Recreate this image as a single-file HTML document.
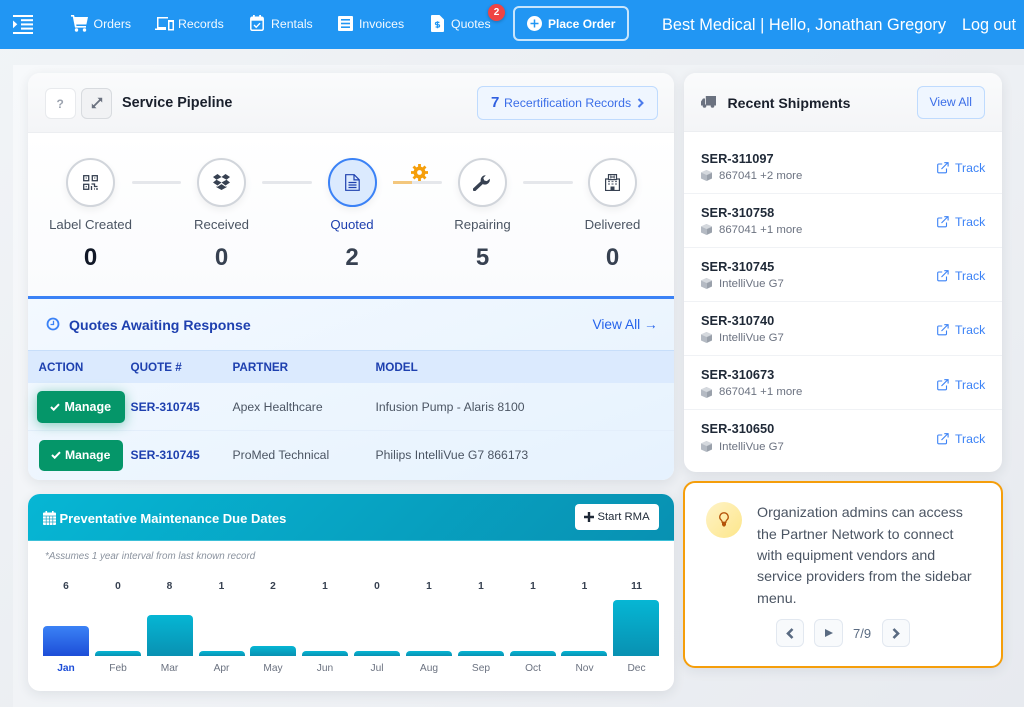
<!DOCTYPE html>
<html><head><meta charset="utf-8"><title>Dashboard</title>
<style>
*{box-sizing:border-box}
html,body{margin:0;padding:0}
body{width:1024px;height:707px;overflow:hidden;position:relative;background:linear-gradient(135deg,#f1f4f7,#e4e7ec);font-family:"Liberation Sans",sans-serif;color:#1f2937}
.a,.t{position:absolute}
.t{white-space:nowrap;line-height:1}
.c{transform:translateX(-50%);text-align:center}
svg{position:absolute;display:block}
.nav{color:#fff;font-size:12.3px;top:17.5px;opacity:.95}
.card{position:absolute;border-radius:12px;background:#fff;box-shadow:0 3px 12px rgba(30,41,59,.09);overflow:hidden}
.circ{position:absolute;top:158px;width:49px;height:49px;border-radius:50%;background:#fff;border:2px solid #d1d5db;box-shadow:0 3px 8px rgba(0,0,0,.06)}
.ln{position:absolute;top:180.5px;height:3px;background:#e5e7eb;border-radius:2px}
.lab{top:218px;font-size:13.2px;color:#4b5563}
.num{top:246px;font-size:24px;font-weight:700;color:#374151}
.th{top:362px;font-size:11.7px;font-weight:700;color:#1e40af}
.cell{font-size:12.2px;color:#4b5563}
.ser{font-size:12.1px;font-weight:700;color:#1e40af}
.btn{position:absolute;background:#059669;border-radius:5px;color:#fff;font-weight:700}
.v{top:582px;font-size:10.2px;font-weight:700;color:#374151}
.m{top:664px;font-size:10.2px;color:#6b7280}
.bar{position:absolute;width:46px;bottom:35px;border-radius:4px 4px 0 0;background:linear-gradient(180deg,#06b6d4,#0891b2)}
.sid{left:701px;font-size:12.8px;font-weight:700;color:#1f2937}
.sub{left:719px;font-size:11.4px;color:#6b7280}
.tr{left:955px;font-size:12.3px;color:#3b82f6}
.sep{position:absolute;left:684px;width:318px;height:1px;background:#f0f2f5}
.tip{left:757px;font-size:14.25px;color:#4b5563}
.tb{position:absolute;top:619px;height:28px;background:#f8fafc;border:1px solid #e2e8f0;border-radius:6px}
</style></head><body>

<div class="a" style="left:0;top:0;width:1024px;height:49px;background:#2196f3"></div>
<div class="a" style="left:13px;top:65px;width:1011px;height:642px;background:linear-gradient(135deg,#f7f9fb,#e7eaef)"></div>

<!-- hamburger -->
<svg style="left:13px;top:15px" width="20" height="19" viewBox="0 0 20 19" fill="#fff"><rect y="0" width="20" height="2"/><rect x="8" y="4.2" width="12" height="2"/><rect x="8" y="8.4" width="12" height="2"/><rect x="8" y="12.6" width="12" height="2"/><rect y="17" width="20" height="2"/><path d="M0 5.500l4.300 3.800L0 13.200z"/></svg>

<!-- cart -->
<svg style="left:71px;top:15px" width="17" height="17" viewBox="0 0 17 17" fill="#fff"><path d="M0 0h3l.6 2H17l-1.600 7.500H5.200l.3 1.500H15v1.600H4L1.800 1.600H0z"/><circle cx="5.500" cy="15" r="1.700"/><circle cx="13.500" cy="15" r="1.700"/></svg>
<div class="t nav" style="left:93.5px">Orders</div>

<!-- laptop/devices -->
<svg style="left:155px;top:16px" width="19" height="15" viewBox="0 0 19 15" fill="#fff"><path d="M2 1h11v1.500H3.500V11H11v3H0v-1.500h2z"/><path fill-rule="evenodd" d="M13 4h6v10.500h-6zM14.500 6v7h3V6z"/></svg>
<div class="t nav" style="left:178px">Records</div>

<!-- calendar check -->
<svg style="left:250px;top:15px" width="14" height="16" viewBox="0 0 14 16"><rect x=".8" y="2.3" width="12.4" height="12.9" rx="1.4" fill="none" stroke="#fff" stroke-width="1.5"/><rect x="1" y="2.5" width="12" height="3.2" fill="#fff"/><rect x="3" y="0" width="1.8" height="3.5" fill="#fff"/><rect x="9.2" y="0" width="1.8" height="3.5" fill="#fff"/><path d="M4 10l2.200 2.200L10 8.200" fill="none" stroke="#fff" stroke-width="1.400"/></svg>
<div class="t nav" style="left:271px">Rentals</div>

<!-- invoice -->
<svg style="left:338px;top:16px" width="15" height="15" viewBox="0 0 15 15"><rect width="15" height="15" rx="1" fill="#fff"/><rect x="3" y="3" width="9" height="1.6" fill="#2196f3"/><rect x="3" y="6.7" width="9" height="1.6" fill="#2196f3"/><rect x="3" y="10.4" width="9" height="1.6" fill="#2196f3"/></svg>
<div class="t nav" style="left:359px">Invoices</div>

<!-- quote file -->
<svg style="left:431px;top:15px" width="13" height="17" viewBox="0 0 13 17"><path d="M1 0h7.500L13 4.500V16a1 1 0 0 1-1 1H1a1 1 0 0 1-1-1V1a1 1 0 0 1 1-1z" fill="#fff"/><path d="M8.400 7.400H5.600a.9.9 0 0 0 0 2.300h1.800a.9.9 0 0 1 0 2.300H4.600M6.500 6.200v7" fill="none" stroke="#2196f3" stroke-width="1.200"/></svg>
<div class="t nav" style="left:451px">Quotes</div>
<div class="a" style="left:488px;top:4px;width:17px;height:17px;border-radius:50%;background:#ef4444;color:#fff;font-size:10px;font-weight:700;text-align:center;line-height:17px;box-shadow:0 1px 3px rgba(0,0,0,.25)">2</div>

<!-- place order -->
<div class="a" style="left:513px;top:6px;width:116px;height:35px;border:2px solid rgba(255,255,255,.75);border-radius:6px"></div>
<svg style="left:527px;top:16px" width="15" height="15" viewBox="0 0 15 15"><circle cx="7.500" cy="7.500" r="7.500" fill="#fff"/><path d="M7.500 3.500v8M3.500 7.500h8" stroke="#2196f3" stroke-width="1.500"/></svg>
<div class="t" style="left:548px;top:17.5px;font-size:12px;font-weight:700;color:#fff">Place Order</div>

<div class="t" style="left:662px;top:16.5px;font-size:16.35px;color:#fff">Best Medical | Hello, Jonathan Gregory</div>
<div class="t" style="left:962px;top:16.5px;font-size:16.2px;color:#fff">Log out</div>

<!-- Service Pipeline card -->
<div class="card" style="left:28px;top:73px;width:646px;height:407px"></div>
<div class="a" style="left:28px;top:73px;width:646px;height:60px;border-radius:12px 12px 0 0;background:linear-gradient(180deg,#fafbfc,#f4f5f7);border-bottom:1px solid #eceef1"></div>
<div class="a" style="left:28px;top:133px;width:646px;height:163px;background:linear-gradient(180deg,#fff,#fafbfd)"></div>
<div class="a" style="left:45px;top:88px;width:31px;height:31px;background:#fff;border:1px solid #e8eaed;border-radius:6px"></div>
<div class="t" style="left:56.5px;top:98px;font-size:12px;font-weight:700;color:#9ca3af">?</div>
<div class="a" style="left:81px;top:88px;width:31px;height:31px;background:#f1f2f4;border:1px solid #d8dbdf;border-radius:6px"></div>
<svg style="left:91px;top:97px" width="12" height="12" viewBox="0 0 12 12"><path d="M2.500 9.500l7-7" stroke="#6b7280" stroke-width="1.800"/><path d="M6.500 .8h4.700v4.700zM5.500 11.200H.8V6.500z" fill="#6b7280"/></svg>
<div class="t" style="left:122px;top:96px;font-size:14.4px;font-weight:700;color:#1a202c">Service Pipeline</div>

<div class="a" style="left:477px;top:86px;width:181px;height:34px;background:#eff6ff;border:1px solid #bfdbfe;border-radius:6px"></div>
<div class="t" style="left:491px;top:95px;font-size:15px;font-weight:700;color:#2f5fe0">7</div>
<div class="t" style="left:504px;top:97px;font-size:12.3px;color:#3b6ee8">Recertification Records</div>
<svg style="left:637px;top:98px" width="7" height="10" viewBox="0 0 7 10"><path d="M1.500 1l4 4-4 4" fill="none" stroke="#4b7bec" stroke-width="2"/></svg>

<!-- stages -->
<div class="ln" style="left:132px;width:49px"></div>
<div class="ln" style="left:262px;width:50px"></div>
<div class="ln" style="left:393px;width:49px"></div>
<div class="a" style="left:393px;top:180.5px;width:19px;height:3px;background:#f3c77d"></div>
<div class="ln" style="left:523px;width:50px"></div>

<div class="circ" style="left:66px"></div>
<div class="circ" style="left:197px"></div>
<div class="circ" style="left:328px;background:#dbeafe;border-color:#3b82f6"></div>
<div class="circ" style="left:458px"></div>
<div class="circ" style="left:588px"></div>

<!-- QR -->
<svg style="left:83px;top:175px" width="15" height="15" viewBox="0 0 15 15" fill="none" stroke="#374151" stroke-width="1.300"><rect x=".7" y=".7" width="5" height="5"/><rect x="9.300" y=".7" width="5" height="5"/><rect x=".7" y="9.300" width="5" height="5"/><path d="M2.700 3h1M11.300 3h1M2.700 11.600h1M8.500 9h3v2.500h3M8.500 11v4M11 14h1M14 13v2" /></svg>
<!-- dropbox -->
<svg style="left:213px;top:174px" width="17" height="16" viewBox="0 0 17 16" fill="#374151"><path d="M4.500 0L0 3l3.500 2.700L8.500 3zM12.500 0l-4 3 5 2.700L17 3zM3.500 5.700L0 8.500l4.500 3 4-3zM13.500 5.700l-5 2.800 4 3 4.500-3z"/><path d="M3.500 12.200l1 .6 4-2.700 4 2.700 1-.6v1L8.500 16l-5-2.800z"/></svg>
<!-- file -->
<svg style="left:345px;top:174px" width="15" height="17" viewBox="0 0 15 17" fill="none" stroke="#1e40af" stroke-width="1.200"><path d="M.7.7h8.500l5 5v10.600H.7z"/><path d="M9 .7v5.200h5.200M3.500 8.500h8M3.500 11h8M3.500 13.500h8"/></svg>
<!-- gear -->
<svg style="left:411px;top:164px" width="17" height="17" viewBox="0 0 17 17"><circle cx="8.500" cy="8.500" r="4.200" fill="none" stroke="#f59e0b" stroke-width="3.600"/><path d="M8.500 0v3M8.500 14v3M0 8.500h3M14 8.500h3M2.500 2.500l2 2M12.500 12.500l2 2M2.500 14.500l2-2M12.500 4.500l2-2" stroke="#f59e0b" stroke-width="2.800"/></svg>
<!-- wrench -->
<svg style="left:473px;top:174px" width="18" height="17" viewBox="0 0 18 17"><path d="M1.500 15.500L9 8.500" stroke="#374151" stroke-width="3.400" stroke-linecap="round"/><path d="M7.800 7.500a5 5 0 0 1 5-6.300l-2.500 2.800 1 2.500 2.500.6 3-2.400a5 5 0 0 1-6.800 5.500z" fill="#374151"/></svg>
<!-- hospital -->
<svg style="left:605px;top:174px" width="15" height="17" viewBox="0 0 15 17"><rect x=".6" y="5" width="13.800" height="11.500" fill="none" stroke="#374151" stroke-width="1.200"/><rect x="3.500" y=".6" width="8" height="5" fill="#fff" stroke="#374151" stroke-width="1.200"/><path d="M5.800 1.500v3M9.200 1.500v3M5.800 3h3.400" stroke="#374151"/><path d="M3 7.500h2M6.500 7.500h2M10 7.500h2M3 10h2M6.500 10h2M10 10h2" stroke="#6b7280" stroke-width="1.300"/><rect x="5.500" y="12.500" width="4" height="4" fill="#374151"/></svg>

<div class="t c lab" style="left:90.5px">Label Created</div>
<div class="t c lab" style="left:221.5px">Received</div>
<div class="t c lab" style="left:352px;color:#1e40af">Quoted</div>
<div class="t c lab" style="left:482.5px">Repairing</div>
<div class="t c lab" style="left:612.5px">Delivered</div>
<div class="t c num" style="left:90.5px;color:#111827">0</div>
<div class="t c num" style="left:221.5px">0</div>
<div class="t c num" style="left:352px">2</div>
<div class="t c num" style="left:482.5px">5</div>
<div class="t c num" style="left:612.5px">0</div>

<!-- quotes -->
<div class="a" style="left:28px;top:296px;width:646px;height:184px;border-radius:0 0 12px 12px;background:linear-gradient(160deg,#f3f9ff,#e6f2fe);border-top:3px solid #3b82f6"></div>
<svg style="left:46px;top:317px" width="14" height="14" viewBox="0 0 14 14" fill="none" stroke="#3b82f6" stroke-width="1.800"><circle cx="7" cy="7" r="5.500"/><path d="M7.500 3.800V7.500H4.500" stroke-width="1.300"/></svg>
<div class="t" style="left:69px;top:318px;font-size:14.1px;font-weight:700;color:#1e40af">Quotes Awaiting Response</div>
<div class="t" style="left:592.5px;top:318px;font-size:13.7px;color:#2563eb">View All →</div>
<div class="a" style="left:28px;top:350px;width:646px;height:33px;background:#dbeafe;border-top:1px solid #c7defa"></div>
<div class="t th" style="left:38.5px">ACTION</div>
<div class="t th" style="left:130.5px">QUOTE #</div>
<div class="t th" style="left:232.5px">PARTNER</div>
<div class="t th" style="left:375.5px">MODEL</div>
<div class="a" style="left:28px;top:430px;width:646px;height:1px;background:#e3eefb"></div>

<div class="btn" style="left:37px;top:391px;width:88px;height:32px;box-shadow:0 2px 12px rgba(5,150,105,.45)"></div>
<svg style="left:50px;top:403px" width="10" height="8" viewBox="0 0 10 8"><path d="M1 4l2.700 2.700L9 1.200" fill="none" stroke="#fff" stroke-width="2"/></svg>
<div class="t" style="left:64.5px;top:400.5px;font-size:12.5px;font-weight:700;color:#fff">Manage</div>
<div class="btn" style="left:39px;top:440px;width:84px;height:31px"></div>
<svg style="left:51px;top:451px" width="10" height="8" viewBox="0 0 10 8"><path d="M1 4l2.700 2.700L9 1.200" fill="none" stroke="#fff" stroke-width="2"/></svg>
<div class="t" style="left:65px;top:448.5px;font-size:12.2px;font-weight:700;color:#fff">Manage</div>

<div class="t ser" style="left:130.5px;top:401px">SER-310745</div>
<div class="t cell" style="left:232.5px;top:401px">Apex Healthcare</div>
<div class="t cell" style="left:375.5px;top:401px">Infusion Pump - Alaris 8100</div>
<div class="t ser" style="left:130.5px;top:449px">SER-310745</div>
<div class="t cell" style="left:232.5px;top:449px">ProMed Technical</div>
<div class="t cell" style="left:375.5px;top:449px">Philips IntelliVue G7 866173</div>

<!-- PM card -->
<div class="card" style="left:28px;top:494px;width:646px;height:197px">
<div class="a" style="left:0;top:0;width:646px;height:47px;background:linear-gradient(135deg,#06b6d4,#0891b2);border-bottom:1px solid #3cc0d8"></div>
<div class="bar" style="left:15px;height:30px;background:linear-gradient(180deg,#3b82f6,#1d4ed8)"></div>
<div class="bar" style="left:67px;height:5px"></div>
<div class="bar" style="left:119px;height:41px"></div>
<div class="bar" style="left:171px;height:5px"></div>
<div class="bar" style="left:222px;height:10px"></div>
<div class="bar" style="left:274px;height:5px"></div>
<div class="bar" style="left:326px;height:5px"></div>
<div class="bar" style="left:378px;height:5px"></div>
<div class="bar" style="left:430px;height:5px"></div>
<div class="bar" style="left:482px;height:5px"></div>
<div class="bar" style="left:533px;height:5px"></div>
<div class="bar" style="left:585px;height:56px"></div>
</div>
<svg style="left:43px;top:511px" width="13" height="14" viewBox="0 0 13 14"><rect x="0" y="1.500" width="13" height="12.500" rx="1" fill="#fff"/><path d="M0 5h13M3.200 5v9M6.500 5v9M9.800 5v9M0 8h13M0 11h13" stroke="#22a9c8" stroke-width=".7"/><rect x="2.500" y="0" width="1.600" height="3" fill="#fff"/><rect x="9" y="0" width="1.600" height="3" fill="#fff"/></svg>
<div class="t" style="left:59.5px;top:511.5px;font-size:13px;font-weight:700;color:#fff">Preventative Maintenance Due Dates</div>
<div class="a" style="left:575px;top:504px;width:84px;height:26px;background:#fff;border-radius:4px"></div>
<svg style="left:584px;top:512px" width="10" height="10" viewBox="0 0 10 10"><path d="M5 0v10M0 5h10" stroke="#1f2937" stroke-width="2.400"/></svg>
<div class="t" style="left:597.5px;top:511.5px;font-size:11.3px;color:#1f2937">Start RMA</div>
<div class="t" style="left:45px;top:552px;font-size:9.8px;font-style:italic;color:#8a929e">*Assumes 1 year interval from last known record</div>

<div class="t c v" style="left:66px">6</div><div class="t c v" style="left:118px">0</div><div class="t c v" style="left:169.5px">8</div><div class="t c v" style="left:221.5px">1</div><div class="t c v" style="left:273px">2</div><div class="t c v" style="left:325px">1</div><div class="t c v" style="left:377px">0</div><div class="t c v" style="left:429px">1</div><div class="t c v" style="left:481px">1</div><div class="t c v" style="left:533px">1</div><div class="t c v" style="left:584.5px">1</div><div class="t c v" style="left:636.5px">11</div>
<div class="t c m" style="left:66px;color:#1d4ed8;font-weight:700">Jan</div><div class="t c m" style="left:118px">Feb</div><div class="t c m" style="left:169.5px">Mar</div><div class="t c m" style="left:221.5px">Apr</div><div class="t c m" style="left:273px">May</div><div class="t c m" style="left:325px">Jun</div><div class="t c m" style="left:377px">Jul</div><div class="t c m" style="left:429px">Aug</div><div class="t c m" style="left:481px">Sep</div><div class="t c m" style="left:533px">Oct</div><div class="t c m" style="left:584.5px">Nov</div><div class="t c m" style="left:636.5px">Dec</div>

<!-- Shipments -->
<div class="card" style="left:684px;top:73px;width:318px;height:399px"></div>
<div class="a" style="left:684px;top:73px;width:318px;height:59px;border-radius:12px 12px 0 0;background:linear-gradient(180deg,#fafbfc,#f4f5f7);border-bottom:1px solid #eceef1"></div>
<svg style="left:701px;top:96px" width="15" height="12" viewBox="0 0 15 12" fill="#6b7280"><path d="M4.800 0H15v9.500H4.800zM4 2.500H2L0 5.500v4h4z"/><circle cx="3.500" cy="10" r="1.800"/><circle cx="11.500" cy="10" r="1.800"/></svg>
<div class="t" style="left:727.5px;top:96px;font-size:14.1px;font-weight:700;color:#1a202c">Recent Shipments</div>
<div class="a" style="left:917px;top:86px;width:68px;height:33px;background:#eff6ff;border:1px solid #bfdbfe;border-radius:6px"></div>
<div class="t" style="left:929.5px;top:96px;font-size:12.2px;color:#3b6ee8">View All</div>

<div class="sep" style="top:193px"></div><div class="sep" style="top:247px"></div><div class="sep" style="top:301px"></div><div class="sep" style="top:355px"></div><div class="sep" style="top:409px"></div>

<div class="t sid" style="top:152.500px">SER-311097</div><div class="t sub" style="top:170.5px">867041 +2 more</div>
<div class="t sid" style="top:207px">SER-310758</div><div class="t sub" style="top:224.5px">867041 +1 more</div>
<div class="t sid" style="top:261px">SER-310745</div><div class="t sub" style="top:278.5px">IntelliVue G7</div>
<div class="t sid" style="top:315px">SER-310740</div><div class="t sub" style="top:332.5px">IntelliVue G7</div>
<div class="t sid" style="top:369px">SER-310673</div><div class="t sub" style="top:386.5px">867041 +1 more</div>
<div class="t sid" style="top:423px">SER-310650</div><div class="t sub" style="top:441.5px">IntelliVue G7</div>

<div class="t tr" style="top:162px">Track</div><div class="t tr" style="top:216px">Track</div><div class="t tr" style="top:270px">Track</div><div class="t tr" style="top:324px">Track</div><div class="t tr" style="top:378.5px">Track</div><div class="t tr" style="top:432.5px">Track</div>

<svg width="0" height="0" style="position:absolute"><defs>
<g id="bx"><path d="M5.500 0L11 2.500v6L5.500 11 0 8.500v-6z" fill="#b4bac3"/><path d="M5.500 5L0 2.500 5.500 0 11 2.500z" fill="#d5d9de"/><path d="M6 5.200L11 3v5.400L6 10.700z" fill="#9aa1ab"/></g>
<g id="ex" fill="none" stroke="#3b82f6" stroke-width="1.100"><path d="M9.500 6.500v3.300a1 1 0 0 1-1 1H1.700a1 1 0 0 1-1-1V3a1 1 0 0 1 1-1h3.500"/><path d="M4.500 7L10.500 1"/><path d="M7.300.7h3.800v3.800"/></g>
</defs></svg>
<svg style="left:701px;top:170px" width="11" height="11"><use href="#bx"/></svg>
<svg style="left:701px;top:224px" width="11" height="11"><use href="#bx"/></svg>
<svg style="left:701px;top:278px" width="11" height="11"><use href="#bx"/></svg>
<svg style="left:701px;top:332px" width="11" height="11"><use href="#bx"/></svg>
<svg style="left:701px;top:386.5px" width="11" height="11"><use href="#bx"/></svg>
<svg style="left:701px;top:441px" width="11" height="11"><use href="#bx"/></svg>
<svg style="left:937px;top:162px" width="12" height="12"><use href="#ex"/></svg>
<svg style="left:937px;top:216px" width="12" height="12"><use href="#ex"/></svg>
<svg style="left:937px;top:270px" width="12" height="12"><use href="#ex"/></svg>
<svg style="left:937px;top:324px" width="12" height="12"><use href="#ex"/></svg>
<svg style="left:937px;top:378.5px" width="12" height="12"><use href="#ex"/></svg>
<svg style="left:937px;top:432.5px" width="12" height="12"><use href="#ex"/></svg>

<!-- Tip -->
<div class="a" style="left:683px;top:481px;width:320px;height:187px;background:#fff;border:2px solid #f59e0b;border-radius:12px;box-shadow:0 3px 12px rgba(30,41,59,.08)"></div>
<div class="a" style="left:706px;top:502px;width:36px;height:36px;border-radius:50%;background:linear-gradient(135deg,#fef3c7,#fde68a)"></div>
<svg style="left:719px;top:512px" width="10" height="15" viewBox="0 0 10 15"><path d="M5 .8a4.200 4.200 0 0 0-2.600 7.500c.6.6.8 1.200.8 2h3.600c0-.8.2-1.400.8-2A4.200 4.200 0 0 0 5 .8z" fill="none" stroke="#b45309" stroke-width="1.300"/><path d="M3 10.500h4v2.500L5.800 14.500H4.200L3 13z" fill="#b45309"/></svg>
<div class="t tip" style="top:506px">Organization admins can access</div>
<div class="t tip" style="top:528px">the Partner Network to connect</div>
<div class="t tip" style="top:549px">with equipment vendors and</div>
<div class="t tip" style="top:570px">service providers from the sidebar</div>
<div class="t tip" style="top:592px">menu.</div>
<div class="tb" style="left:776px;width:28px"></div>
<div class="tb" style="left:814px;width:29px"></div>
<div class="tb" style="left:882px;width:28px"></div>
<svg style="left:786px;top:628px" width="8" height="11" viewBox="0 0 8 11"><path d="M6.500 1L2 5.500l4.500 4.500" fill="none" stroke="#5a6b82" stroke-width="2.600"/></svg>
<svg style="left:824px;top:628px" width="10" height="10" viewBox="0 0 10 10"><path d="M1 1l8 4-8 4z" fill="#5a6b82"/></svg>
<div class="t" style="left:853px;top:626.5px;font-size:13px;color:#5a6b82">7/9</div>
<svg style="left:892px;top:628px" width="8" height="11" viewBox="0 0 8 11"><path d="M1.500 1L6 5.500 1.500 10" fill="none" stroke="#5a6b82" stroke-width="2.600"/></svg>

</body></html>
